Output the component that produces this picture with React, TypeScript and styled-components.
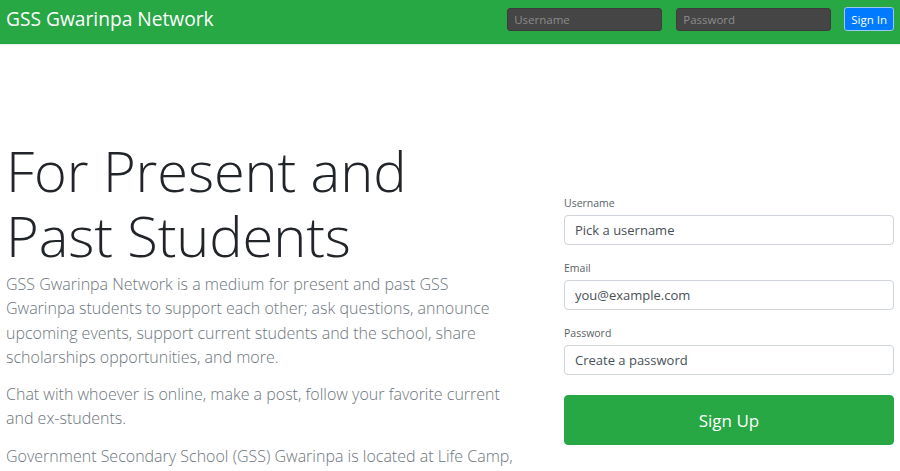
import React from "react";
import styled, { createGlobalStyle } from "styled-components";

const Global = createGlobalStyle`
  html, body { margin: 0; padding: 0; background: #fff; }
  body { font-family: "Open Sans", "Noto Sans", sans-serif; color: #212529; }
  * { box-sizing: border-box; }
`;

const NavBar = styled.header`
  height: 45px;
  background: #28a745;
  border-bottom: 1px solid #e6f2e8;
  display: flex;
  align-items: center;
  padding: 0 6px 0 6px;
`;

const Brand = styled.div`
  color: #fff;
  font-size: 19.2px;
  flex: 1;
  line-height: 1;
  margin-top: -6px;
`;

const NavForm = styled.form`
  display: flex;
  align-items: center;
  gap: 14px;
  margin-top: -6px;
`;

const NavInput = styled.input`
  width: 155px;
  height: 23px;
  background: #454545;
  border: 1px solid #3c3c3c;
  border-radius: 3px;
  color: #ddd;
  font-family: inherit;
  font-size: 11.5px;
  padding: 0 6px;
  &::placeholder { color: #8c8c8c; }
`;

const SignIn = styled.button`
  height: 24px;
  padding: 0 6px;
  background: #007bff;
  color: #fff;
  border: 1px solid #9cc7f3;
  border-radius: 3px;
  font-family: inherit;
  font-size: 11.5px;
  margin-left: -1px;
`;

const Hero = styled.main`
  display: grid;
  grid-template-columns: 1fr 330px;
  column-gap: 50px;
  padding: 93px 6px 0 6px;
  align-items: start;
`;

const Left = styled.section``;

const Title = styled.h1`
  margin: 0 0 4px 0;
  font-size: 56px;
  font-weight: 300;
  line-height: 65px;
  letter-spacing: -0.1px;
`;

const Lead = styled.p`
  margin: 0 0 13px 0;
  font-size: 16px;
  font-weight: 300;
  line-height: 24.3px;
  color: #6c757d;
  max-width: 512px;
`;

const FormCol = styled.form`
  display: flex;
  flex-direction: column;
  margin-top: 58px;
`;

const Field = styled.div`
  display: flex;
  flex-direction: column;
  margin-bottom: 16px;
`;

const Label = styled.label`
  font-size: 10.5px;
  color: #5a6168;
  margin-bottom: 4px;
  line-height: 15px;
`;

const Input = styled.input`
  height: 30px;
  border: 1px solid #ced4da;
  border-radius: 4px;
  padding: 0 10px;
  font-family: inherit;
  font-size: 13px;
  color: #495057;
  &::placeholder { color: #495057; }
`;

const SignUp = styled.button`
  margin-top: 4px;
  height: 50px;
  background: #28a745;
  border: 1px solid #28a745;
  border-radius: 4px;
  color: #fff;
  font-family: inherit;
  font-size: 17px;
`;

export default function App() {
  return (
    <>
      <Global />
      <NavBar>
        <Brand>GSS Gwarinpa Network</Brand>
        <NavForm>
          <NavInput placeholder="Username" />
          <NavInput type="password" placeholder="Password" />
          <SignIn type="button">Sign In</SignIn>
        </NavForm>
      </NavBar>
      <Hero>
        <Left>
          <Title>For Present and<br />Past Students</Title>
          <Lead>
            GSS Gwarinpa Network is a medium for present and past GSS Gwarinpa students to support each other; ask questions, announce upcoming events, support current students and the school, share scholarships opportunities, and more.
          </Lead>
          <Lead>
            Chat with whoever is online, make a post, follow your favorite current and ex-students.
          </Lead>
          <Lead>
            Government Secondary School (GSS) Gwarinpa is located at Life Camp, Gwarinpa, Abuja, Nigeria.
          </Lead>
        </Left>
        <FormCol>
          <Field>
            <Label>Username</Label>
            <Input placeholder="Pick a username" />
          </Field>
          <Field>
            <Label>Email</Label>
            <Input placeholder="you@example.com" />
          </Field>
          <Field>
            <Label>Password</Label>
            <Input type="password" placeholder="Create a password" />
          </Field>
          <SignUp type="button">Sign Up</SignUp>
        </FormCol>
      </Hero>
    </>
  );
}
